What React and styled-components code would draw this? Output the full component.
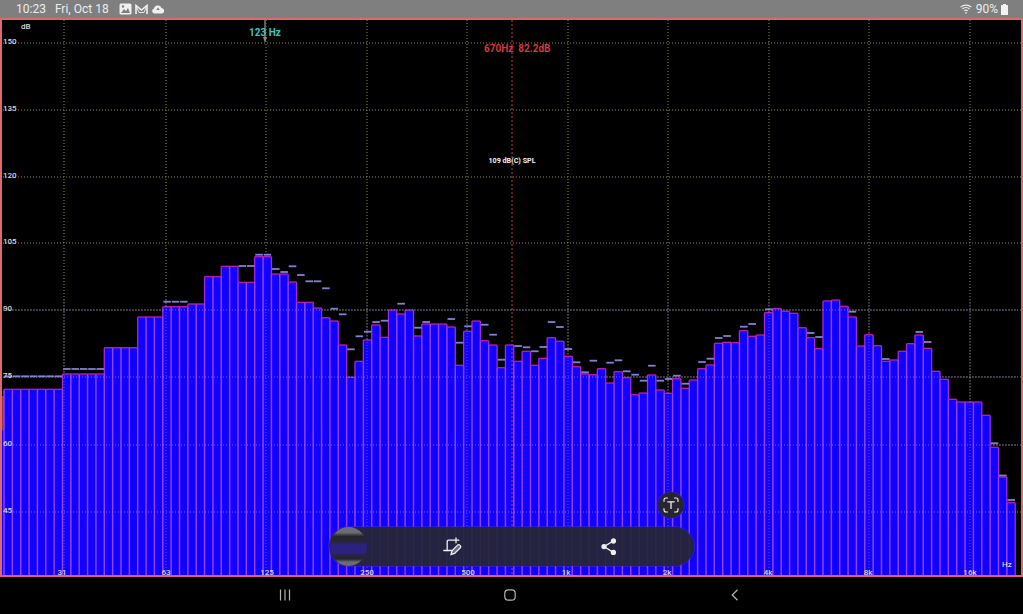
import React from 'react';
import styled, { createGlobalStyle } from 'styled-components';

const Global = createGlobalStyle`
  html, body { margin: 0; padding: 0; background: #000; overflow: hidden; }
  body { font-family: Roboto, "Liberation Sans", sans-serif; }
`;

const Page = styled.div`
  width: 1023px; height: 614px; display: flex; flex-direction: column; background: #000; overflow: hidden;
`;
const StatusBar = styled.header`
  height: 18px; flex: none; background: #7f7f7f; color: #ececec; font-size: 12px;
  display: flex; align-items: center; padding: 0 15px 0 16px; box-sizing: border-box;
`;
const Clock = styled.span`margin-right: 9px;`;
const DateText = styled.span`margin-right: 10px;`;
const StatusIcons = styled.div`display: flex; align-items: center; gap: 3px;`;
const Spacer = styled.div`flex: 1;`;
const Battery = styled.span`margin: 0 3px 0 4px;`;
const Panel = styled.main`
  position: relative; height: 559px; flex: none;
  &::after {
    content: ""; position: absolute; inset: 0; pointer-events: none;
    border: 2px solid #dc6a6c; border-bottom-color: #e85a80;
  }
`;
const Chart = styled.svg`display: block; width: 1023px; height: 559px;`;
const AxisLabel = styled.text`
  font-family: Roboto, sans-serif; font-size: 8px; font-weight: 500; fill: #d8d8e0;
`;
const Readout = styled.text`
  font-family: Roboto, sans-serif; font-size: ${p => p.$size || 10}px; font-weight: 700; fill: ${p => p.$color};
  white-space: pre;
`;
const NavBar = styled.nav`
  height: 37px; flex: none; background: #000; display: grid; grid-template-columns: 285px 224px 223px 1fr;
  color: #b4b4b4;
`;
const NavSlot = styled.div`
  display: flex; align-items: center; justify-content: flex-end; transform: translateX(7px);
  padding-bottom: 1px;
`;
const Toolbar = styled.div`
  position: absolute; left: 329px; top: 509px; width: 365px; height: 39px; border-radius: 20px;
  background: rgba(38, 38, 52, 0.93); box-shadow: 0 0 0 1px rgba(60,50,170,.55);
  color: #eeeeee;
`;
const Thumb = styled.div`
  position: absolute; left: 1px; top: 0; width: 37px; height: 39px; border-radius: 50%;
  background: linear-gradient(#6c6c72 0 14%, #25252f 24% 36%, #2a2180 46% 66%, #25252f 76% 82%, #6c6c72 90%);
`;
const ToolIcon = styled.div`
  position: absolute; top: 10px; left: ${p => p.$left}px; width: 20px; height: 20px; display: flex;
`;
const ScanButton = styled.div`
  position: absolute; left: 658px; top: 474px; width: 26px; height: 26px; border-radius: 50%;
  background: #262632; box-shadow: 0 0 0 1px rgba(60,50,170,.4);
  display: flex; align-items: center; justify-content: center; color: #eee;
`;

const X0 = 4, STEP = 8.357;
const rep = (n, t, p) => Array.from({ length: n }, () => [t, p]);
const bars = [
  ...rep(7, 389.3, 376.3), ...rep(5, 374, 369), ...rep(4, 347.7, 347), ...rep(3, 317, 316),
  ...rep(3, 306.7, 301.7), ...rep(2, 304, 304), ...rep(2, 276.7, 276), ...rep(2, 266.3, 266),
  ...rep(2, 282.3, 266), ...rep(2, 256.7, 254.7),
  [274,269],[274,272],[282,266.3],[302.3,275],[302.3,281.3],[308,281.3],[317.7,288.3],[321,308.7],
  [345,314.3],[377.3,349.3],[361.3,336.3],[340,331.7],[325,322],[337.3,320.7],[310,309],[314,303.7],[310,309.5],
  [336,327.7],[324,322],[324,323.5],[324,323.5],[327,319],[365.3,342.7],[331.3,326.3],[321,320.5],[340.7,324.7],
  [345,334.7],[367.7,359.7],[345,344.3],[361.3,346],[351.3,347.3],[365.3,351.3],[358.3,347],[337.7,322],
  [341.3,327],[356.3,349],[366.7,362.3],[374,372.3],[374.7,360.7],[368.7,368],[383,362.7],[371.7,360.3],
  [377.7,371.3],[394.7,374.7],[393,380.7],[375,365.7],[390,380.7],[393.3,379],[378.7,375.7],
  [388.3,383.7],[380,379.5],[368.7,362],[365,358.7],[343.3,338],[342.3,336],[342.7,342],[330.7,326.7],
  [336.3,324],[335,334.5],[312.7,309.3],[308.7,308],[311.3,311],[313.3,313],[327.7,327],[337.7,333],[348.7,337],
  [301,300.5],[300,299.5],[306.3,306],[317,311.7],[346,345.5],[334.7,334],[345.7,345],[361.3,359],[360,359.5],
  [351.3,351],[343.7,343],[335,332],[348.3,342],[371.3,371],[379.3,379],
  [399.3,399],[402,401.5],[402,401.5],[402,401.5],[415.3,415],[447.3,443.3],[477,475.5],[502.7,500],
];

const BOTTOM = 576;
const hLines = [43, 110, 177, 243, 310, 377, 445, 512];
const vLines = [64, 166, 266, 367, 467, 568, 668, 769, 869, 970];
const dbLabels = [['150', 43], ['135', 110], ['120', 177], ['105', 243], ['90', 310], ['75', 377], ['60', 445], ['45', 512]];
const hzLabels = [['31', 62], ['63', 166], ['125', 267], ['250', 367], ['500', 468], ['1k', 566], ['2k', 667], ['4k', 768], ['8k', 868], ['16k', 970]];

const Spectrum = () => (
  <Chart viewBox="0 18 1023 559" aria-label="Spectrum">
    <rect x="0" y="18" width="1023" height="559" fill="#000" />
    {vLines.map(x => <line key={x} x1={x} x2={x} y1="20" y2={BOTTOM} stroke="#8a8a58" strokeWidth="1" strokeDasharray="1 2" />)}
    {hLines.map(y => <line key={y} x1="3" x2="1021" y1={y} y2={y} stroke="#8a8a58" strokeWidth="1" strokeDasharray="1 2" />)}
    <rect x="2" y="396" width="2" height="180" fill="#1400ff" />
    <rect x="2" y="396" width="2.5" height="34" fill="#a03040" />
    {bars.map(([t], i) => (
      <rect key={i} x={X0 + i * STEP} y={t} width={STEP + 0.2} height={BOTTOM - t} fill="#1200ff" />
    ))}
    {bars.map(([t], i) => {
      const x = X0 + i * STEP;
      const prev = i ? bars[i - 1][0] : t;
      return (
        <g key={i}>
          <line x1={x} x2={x} y1={Math.max(t, prev)} y2={BOTTOM} stroke="#9040ff" strokeWidth="1.5" />
          {prev !== t && <line x1={x} x2={x} y1={Math.min(t, prev)} y2={Math.max(t, prev)} stroke="#a02cd8" strokeWidth="1.3" />}
          {i === bars.length - 1 && <line x1={x + STEP} x2={x + STEP} y1={t} y2={BOTTOM} stroke="#a02cd8" strokeWidth="1.3" />}
          <line x1={x} x2={x + STEP} y1={t} y2={t} stroke="#c01ea8" strokeWidth="1.3" />
        </g>
      );
    })}
    {bars.map(([t, p], i) => {
      if (t - p < 1.2) return null;
      const x = X0 + i * STEP;
      return <line key={i} x1={x + 0.6} x2={x + STEP - 0.2} y1={p} y2={p} stroke="#8080d8" strokeWidth="1.8" />;
    })}
    {vLines.map(x => <line key={x} x1={x} x2={x} y1="300" y2={BOTTOM} stroke="#8f8cff" strokeOpacity=".55" strokeWidth="1" strokeDasharray="1 2" />)}
    {hLines.slice(4).map(y => <line key={y} x1="4" x2="1016" y1={y} y2={y} stroke="#8f8cff" strokeOpacity=".7" strokeWidth="1" strokeDasharray="1 2" />)}
    <line x1="512" x2="512" y1="20" y2={BOTTOM} stroke="#d4363e" strokeWidth="1" strokeDasharray="2 2" />
    <line x1="265" x2="265" y1="20" y2="37" stroke="#5c5c5c" strokeWidth="2" />
    <path d="M263 37h4l-2 6z" fill="#8a8a8a" />
    {dbLabels.map(([l, y]) => <AxisLabel key={l} x="3" y={y + 1}>{l}</AxisLabel>)}
    <AxisLabel x="21" y="29">dB</AxisLabel>
    {hzLabels.map(([l, x]) => <AxisLabel key={l} x={x} y="575" textAnchor="middle">{l}</AxisLabel>)}
    <AxisLabel x="1002" y="567">Hz</AxisLabel>
    <Readout x="265" y="35.5" textAnchor="middle" $color="#36c6c4">123 Hz</Readout>
    <Readout x="484" y="52" $color="#d8383c">{'670Hz  82.2dB'}</Readout>
    <Readout x="512" y="163" textAnchor="middle" $color="#f0f0f0" $size={7.2}>109 dB(C) SPL</Readout>
  </Chart>
);

const Picture = () => (
  <svg width="13" height="12" viewBox="0 0 13 12"><rect x=".5" y=".5" width="12" height="11" rx="1.5" fill="#f0f0f0" /><path d="M2 10l3-4 2 2 2-3 2 5z" fill="#7f7f7f" /><circle cx="4" cy="3.5" r="1.2" fill="#7f7f7f" /></svg>
);
const Mail = () => (
  <svg width="13" height="11" viewBox="0 0 13 11" fill="none" stroke="#f0f0f0" strokeWidth="1.6"><path d="M1 10V1.5l5.5 4.5L12 1.5V10" /><path d="M1 1.5l3 7h5l3-7" strokeWidth=".9" /></svg>
);
const Cloud = () => (
  <svg width="14" height="9" viewBox="0 0 14 9"><path d="M3.2 8.5a2.4 2.4 0 0 1-.3-4.7A4 4 0 0 1 10.5 3a2.8 2.8 0 0 1 .6 5.5z" fill="#f0f0f0" /><path d="M7 2.6 5.2 5h3.6z" fill="#7f7f7f" /></svg>
);
const Wifi = () => (
  <svg width="12" height="10" viewBox="0 0 12 10" fill="none" stroke="#ececec" strokeWidth="1.1"><path d="M.6 3.2a8 8 0 0 1 10.8 0M2.4 5a5.4 5.4 0 0 1 7.2 0M4.2 6.9a2.8 2.8 0 0 1 3.6 0" /><circle cx="6" cy="8.8" r=".9" fill="#ececec" stroke="none" /></svg>
);
const BatteryIcon = () => (
  <svg width="7" height="11" viewBox="0 0 7 11"><path d="M2 0h3v1h1.5a.5.5 0 0 1 .5.5v9a.5.5 0 0 1-.5.5H.5a.5.5 0 0 1-.5-.5v-9A.5.5 0 0 1 .5 1H2z" fill="#f2f2f2" /></svg>
);
const CropEdit = () => (
  <svg width="20" height="20" viewBox="0 0 20 20" fill="none" stroke="currentColor" strokeWidth="1.3" strokeLinecap="round">
    <path d="M13 .8v5M10.6 3.2h5.2" />
    <path d="M10 3.2H5.5a1.3 1.3 0 0 0-1.3 1.3v9" />
    <path d="M.8 13.5h8" />
    <path d="M8 17.5l1-3.6 5.6-5.8a1.5 1.5 0 0 1 2.2 0l.5.5a1.5 1.5 0 0 1 0 2.1l-5.7 5.8z" fill="currentColor" fillOpacity=".35" />
  </svg>
);
const Share = () => (
  <svg width="20" height="20" viewBox="0 0 20 20" fill="currentColor" stroke="currentColor" strokeWidth="1.3">
    <path d="M14.3 4 5 9.6l9.3 5.8" fill="none" />
    <circle cx="14.4" cy="4" r="2" /><circle cx="5" cy="9.6" r="2" /><circle cx="14.4" cy="15.4" r="2" />
  </svg>
);
const ScanText = () => (
  <svg width="16" height="16" viewBox="0 0 16 16" fill="none" stroke="currentColor" strokeWidth="1.1" strokeLinecap="round">
    <path d="M1 4.5V3a2 2 0 0 1 2-2h1.5M11.5 1H13a2 2 0 0 1 2 2v1.5M15 11.5V13a2 2 0 0 1-2 2h-1.5M4.5 15H3a2 2 0 0 1-2-2v-1.5" />
    <path d="M4.8 4.8h6.4M8 4.8v6.6" strokeWidth="1.3" />
  </svg>
);

export default function App() {
  return (
    <Page>
      <Global />
      <StatusBar>
        <Clock>10:23</Clock>
        <DateText>Fri, Oct 18</DateText>
        <StatusIcons><Picture /><Mail /><Cloud /></StatusIcons>
        <Spacer />
        <Wifi />
        <Battery>90%</Battery>
        <BatteryIcon />
      </StatusBar>
      <Panel>
        <Spectrum />
        <ScanButton><ScanText /></ScanButton>
        <Toolbar>
          <Thumb />
          <ToolIcon $left={114}><CropEdit /></ToolIcon>
          <ToolIcon $left={270}><Share /></ToolIcon>
        </Toolbar>
      </Panel>
      <NavBar>
        <NavSlot>
          <svg width="14" height="12" viewBox="0 0 14 12" stroke="currentColor" strokeWidth="1.2"><path d="M2.5 .5v11M7 .5v11M11.5 .5v11" /></svg>
        </NavSlot>
        <NavSlot>
          <svg width="12" height="12" viewBox="0 0 12 12" fill="none" stroke="currentColor" strokeWidth="1.2"><rect x=".8" y=".8" width="10.4" height="10.4" rx="3.5" /></svg>
        </NavSlot>
        <NavSlot>
          <svg width="8" height="12" viewBox="0 0 8 12" fill="none" stroke="currentColor" strokeWidth="1.2"><path d="M6.5 .8 1.2 6l5.3 5.2" /></svg>
        </NavSlot>
      </NavBar>
    </Page>
  );
}
